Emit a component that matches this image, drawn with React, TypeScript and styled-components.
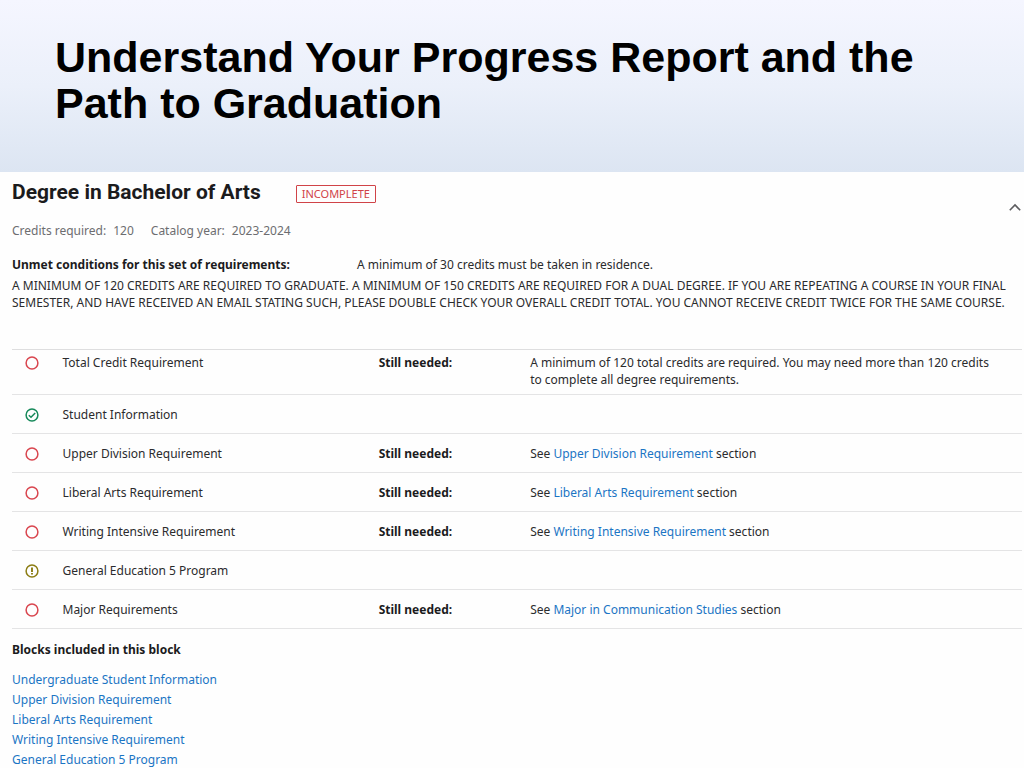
import React from "react";
import styled, { createGlobalStyle } from "styled-components";

const GlobalStyle = createGlobalStyle`
  *, *::before, *::after { box-sizing: border-box; }
  body {
    margin: 0;
    background: #fefefe;
    color: #2b2b2d;
    font-family: "Noto Sans", "Open Sans", sans-serif;
    font-size: 12px;
    line-height: 17px;
  }
  h1, h2, h3, p, dl, dd, ul { margin: 0; padding: 0; }
`;

const Banner = styled.header`
  min-height: 172px;
  padding: 34px 55px 46px;
  background: linear-gradient(#f5f6ff, #ebf0fa 50%, #dce5f2);
`;

const Title = styled.h1`
  color: #000;
  font: bold 43px/46px "Liberation Sans", Arial, sans-serif;
`;

const Report = styled.main`
  padding: 8px 2px 0 12px;
`;

const ReportHeader = styled.div`
  display: flex;
  align-items: flex-start;
  justify-content: space-between;
`;

const Heading = styled.div`
  display: flex;
  align-items: center;
  gap: 35px;
`;

const DegreeName = styled.h2`
  color: #1b1b1d;
  font: bold 21px/24px Roboto, sans-serif;
`;

const Badge = styled.span`
  margin-top: 4px;
  padding: 0 5px;
  border: 1px solid #d04348;
  border-radius: 1px;
  color: #d04348;
  font-size: 11px;
  line-height: 16px;
`;

const CollapseButton = styled.button`
  display: flex;
  margin-top: 22px;
  padding: 0;
  border: 0;
  background: none;
  color: #5c5c5f;
`;

const Facts = styled.dl`
  display: flex;
  gap: 17px;
  margin-top: 8px;
  color: #6d6d70;
`;

const Fact = styled.div`
  display: flex;
  gap: 7px;
`;

const Conditions = styled.div`
  display: flex;
  margin-top: 17px;
`;

const ConditionsLabel = styled.h3`
  flex: 0 0 345px;
  color: #1b1b1d;
  font: inherit;
  font-weight: bold;
`;

const Notice = styled.p`
  margin-top: 4px;
`;

const Requirements = styled.table`
  width: 100%;
  margin-top: 38px;
  border-top: 1px solid #dededf;
  border-collapse: separate;
  border-spacing: 0;
  table-layout: fixed;
`;

const Cell = styled.td<{ $compact?: boolean }>`
  padding: ${(p) => (p.$compact ? "4px 24px 6px 0" : "11px 24px 10px 0")};
  border-bottom: 1px solid #e4e4e5;
  text-align: left;
  vertical-align: top;
  font-weight: normal;
`;

const IconCell = styled(Cell)`
  padding-left: 12px;
  padding-right: 0;
`;

const StatusIcon = styled.svg`
  display: block;
  width: 16px;
  height: 16px;
  margin-top: 1px;
`;

const Column = styled.col<{ $width?: string }>`
  width: ${(p) => p.$width ?? "auto"};
`;

const Needed = styled.strong`
  color: #1b1b1d;
`;

const Link = styled.a`
  color: #1b75c4;
  text-decoration: none;
`;

const BlocksTitle = styled.h3`
  margin-top: 12px;
  color: #1b1b1d;
  font: inherit;
  font-weight: bold;
`;

const Blocks = styled.ul`
  margin-top: 12px;
  list-style: none;
  line-height: 20px;
`;

type Status = "open" | "done" | "warning";

const statusStyle: Record<Status, { color: string; label: string }> = {
  open: { color: "#d9464f", label: "Incomplete" },
  done: { color: "#16895a", label: "Complete" },
  warning: { color: "#8c7d14", label: "Needs attention" },
};

function StatusMark({ status }: { status: Status }) {
  const { color, label } = statusStyle[status];
  return (
    <StatusIcon viewBox="0 0 16 16" fill="none" stroke={color} strokeWidth="1.5" role="img" aria-label={label}>
      <circle cx="8" cy="8" r="5.9" />
      {status === "done" && <path d="M4.8 8.2l2.2 2.1 4.2-4.3" />}
      {status === "warning" && <path d="M8 4.4v4.5M8 9.9v1.7" strokeWidth="1.9" />}
    </StatusIcon>
  );
}

interface Requirement {
  name: string;
  status: Status;
  text?: string;
  section?: string;
}

const requirements: Requirement[] = [
  {
    name: "Total Credit Requirement",
    status: "open",
    text: "A minimum of 120 total credits are required. You may need more than 120 credits to complete all degree requirements.",
  },
  { name: "Student Information", status: "done" },
  { name: "Upper Division Requirement", status: "open", section: "Upper Division Requirement" },
  { name: "Liberal Arts Requirement", status: "open", section: "Liberal Arts Requirement" },
  { name: "Writing Intensive Requirement", status: "open", section: "Writing Intensive Requirement" },
  { name: "General Education 5 Program", status: "warning" },
  { name: "Major Requirements", status: "open", section: "Major in Communication Studies" },
];

const blocks = [
  "Undergraduate Student Information",
  "Upper Division Requirement",
  "Liberal Arts Requirement",
  "Writing Intensive Requirement",
  "General Education 5 Program",
];

function RequirementRow({ name, status, text, section }: Requirement) {
  const compact = Boolean(text);
  return (
    <tr>
      <IconCell $compact={compact}><StatusMark status={status} /></IconCell>
      <Cell as="th" scope="row" $compact={compact}>{name}</Cell>
      <Cell $compact={compact}>{(text || section) && <Needed>Still needed:</Needed>}</Cell>
      <Cell $compact={compact}>
        {text}
        {section && <>See <Link href="#section">{section}</Link> section</>}
      </Cell>
    </tr>
  );
}

export default function App() {
  return (
    <>
      <GlobalStyle />
      <Banner>
        <Title>Understand Your Progress Report and the Path to Graduation</Title>
      </Banner>
      <Report>
        <ReportHeader>
          <Heading>
            <DegreeName>Degree in Bachelor of Arts</DegreeName>
            <Badge>INCOMPLETE</Badge>
          </Heading>
          <CollapseButton type="button" aria-label="Collapse" aria-expanded="true">
            <svg width="14" height="12" viewBox="0 0 14 12" fill="none" stroke="currentColor" strokeWidth="1.6">
              <path d="M1.8 8.2L7 3l5.2 5.2" />
            </svg>
          </CollapseButton>
        </ReportHeader>
        <Facts>
          <Fact><dt>Credits required:</dt><dd>120</dd></Fact>
          <Fact><dt>Catalog year:</dt><dd>2023-2024</dd></Fact>
        </Facts>
        <Conditions>
          <ConditionsLabel>Unmet conditions for this set of requirements:</ConditionsLabel>
          <p>A minimum of 30 credits must be taken in residence.</p>
        </Conditions>
        <Notice>
          A MINIMUM OF 120 CREDITS ARE REQUIRED TO GRADUATE. A MINIMUM OF 150 CREDITS ARE REQUIRED FOR A DUAL
          DEGREE. IF YOU ARE REPEATING A COURSE IN YOUR FINAL SEMESTER, AND HAVE RECEIVED AN EMAIL STATING SUCH,
          PLEASE DOUBLE CHECK YOUR OVERALL CREDIT TOTAL. YOU CANNOT RECEIVE CREDIT TWICE FOR THE SAME COURSE.
        </Notice>
        <Requirements>
          <colgroup>
            <Column $width="5%" />
            <Column $width="31.3%" />
            <Column $width="15%" />
            <Column />
          </colgroup>
          <tbody>
            {requirements.map((r) => <RequirementRow key={r.name} {...r} />)}
          </tbody>
        </Requirements>
        <BlocksTitle>Blocks included in this block</BlocksTitle>
        <Blocks>
          {blocks.map((b) => <li key={b}><Link href="#block">{b}</Link></li>)}
        </Blocks>
      </Report>
    </>
  );
}
